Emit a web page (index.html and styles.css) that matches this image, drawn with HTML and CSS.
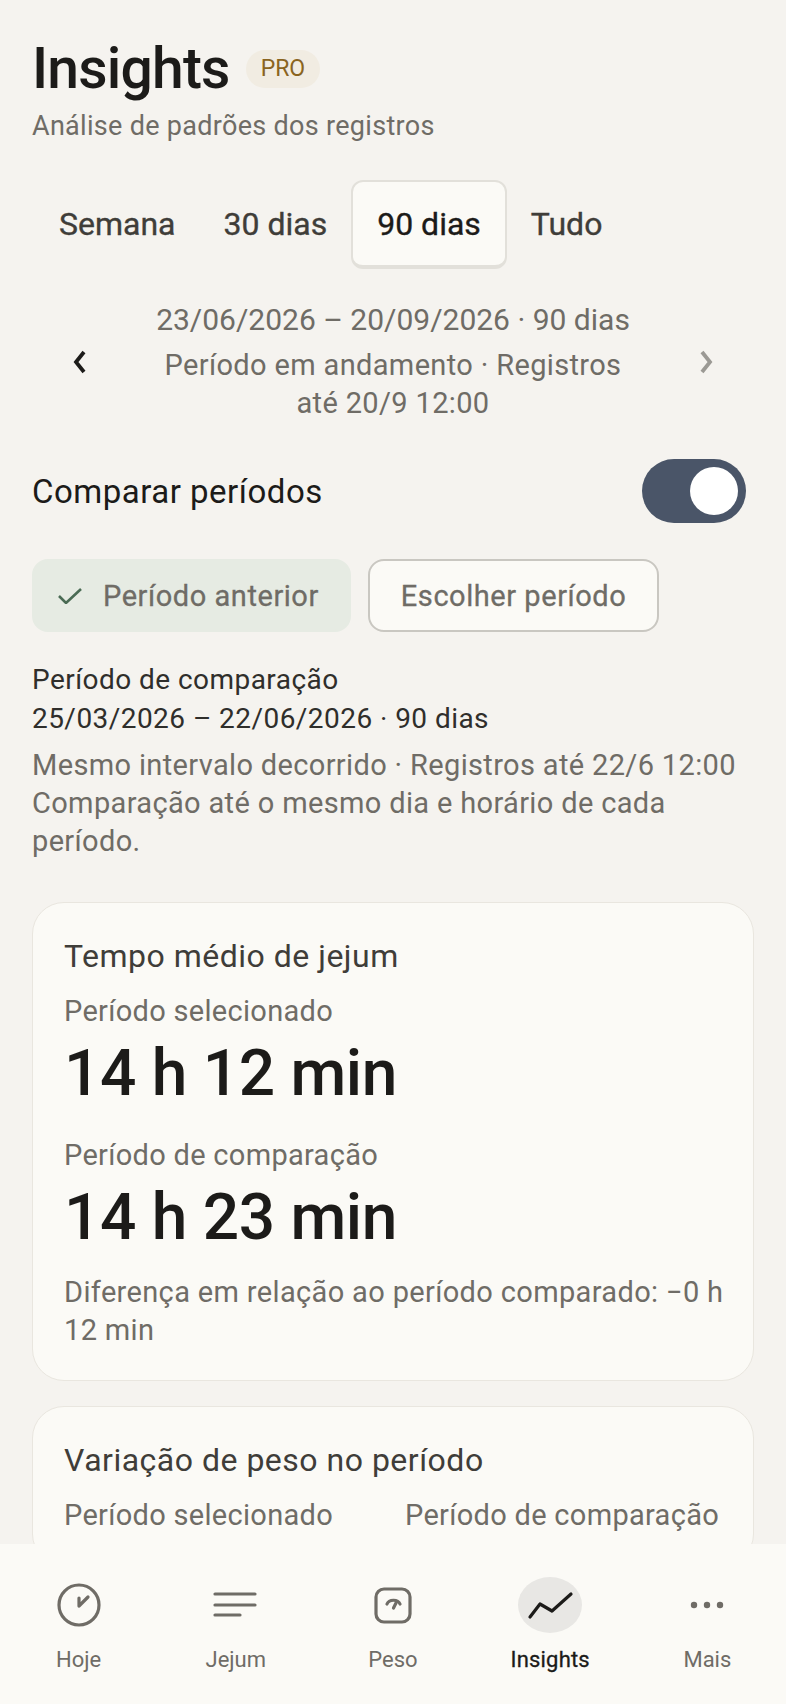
FILE: index.html
```html
<!DOCTYPE html>
<html lang="pt-BR">
<head>
  <meta charset="UTF-8" />
  <meta name="viewport" content="width=device-width, initial-scale=1.0" />
  <title>Insights</title>
  <link rel="stylesheet" href="styles.css">
</head>
<body>
  <div class="app">
    <main class="content">
      <div class="title-row">
        <h1>Insights</h1>
        <span class="pro-badge">PRO</span>
      </div>
      <p class="subtitle">Análise de padrões dos registros</p>

      <div class="tabs">
        <button class="tab">Semana</button>
        <button class="tab">30 dias</button>
        <button class="tab active">90 dias</button>
        <button class="tab">Tudo</button>
      </div>

      <div class="range-nav">
        <svg class="chevron" viewBox="0 0 16 24"><path d="M12 2 4 12l8 10"/></svg>
        <div class="range-text">
          <div class="range-dates">23/06/2026 – 20/09/2026 · 90 dias</div>
          <div class="range-note">Período em andamento · Registros até 20/9 12:00</div>
        </div>
        <svg class="chevron off" viewBox="0 0 16 24"><path d="M4 2l8 10-8 10"/></svg>
      </div>

      <div class="compare-row">
        <span class="compare-label">Comparar períodos</span>
        <span class="toggle"><span class="thumb"></span></span>
      </div>

      <div class="chips">
        <button class="chip selected">
          <svg class="check" viewBox="0 0 24 16"><path d="M1 8l7 7L23 1"/></svg>
          Período anterior
        </button>
        <button class="chip">Escolher período</button>
      </div>

      <div class="compare-info">
        <div class="info-strong">Período de comparação</div>
        <div class="info-strong">25/03/2026 – 22/06/2026 · 90 dias</div>
        <p class="info-note">Mesmo intervalo decorrido · Registros até 22/6 12:00 Comparação até o mesmo dia e horário de cada período.</p>
      </div>

      <section class="card">
        <h2>Tempo médio de jejum</h2>
        <div class="label">Período selecionado</div>
        <div class="value">14 h 12 min</div>
        <div class="label second">Período de comparação</div>
        <div class="value">14 h 23 min</div>
        <p class="diff">Diferença em relação ao período comparado: −0 h 12 min</p>
      </section>

      <section class="card">
        <h2>Variação de peso no período</h2>
        <div class="two-col">
          <div class="label">Período selecionado</div>
          <div class="label">Período de comparação</div>
        </div>
      </section>
    </main>

    <nav class="bottom-nav">
      <a class="nav-item">
        <span class="nav-icon">
          <svg viewBox="0 0 64 56"><circle cx="32" cy="28" r="20"/><path d="M32 29v-8M32 29l9-9"/></svg>
        </span>
        Hoje
      </a>
      <a class="nav-item">
        <span class="nav-icon">
          <svg viewBox="0 0 64 56"><path d="M11 17h40M11 28h40M11 38h25"/></svg>
        </span>
        Jejum
      </a>
      <a class="nav-item">
        <span class="nav-icon">
          <svg viewBox="0 0 64 56"><rect x="15" y="12" width="34" height="33" rx="8"/><path d="M26 27c2-5 11-5 13 0M35 26l-2.500 5"/></svg>
        </span>
        Peso
      </a>
      <a class="nav-item active">
        <span class="nav-icon">
          <svg viewBox="0 0 64 56"><path d="M12 40l10-13 12 7 19-17"/></svg>
        </span>
        Insights
      </a>
      <a class="nav-item">
        <span class="nav-icon">
          <svg viewBox="0 0 64 56"><circle class="dot" cx="19" cy="28" r="3.2"/><circle class="dot" cx="32" cy="28" r="3.2"/><circle class="dot" cx="45" cy="28" r="3.2"/></svg>
        </span>
        Mais
      </a>
    </nav>
  </div>
</body>
</html>
```

FILE: styles.css
```css
:root {
  --bg: #f5f3ef;
  --surface: #fbfaf6;
  --ink: #1c1b19;
  --ink-soft: #3f3d39;
  --muted: #6f6c66;
  --line: #e9e6df;
}
* {
  box-sizing: border-box;
  margin: 0;
  padding: 0;
}
html, body {
  height: 100%;
}
body {
  font-family: Roboto, "Liberation Sans", sans-serif;
  background-color: var(--bg);
  color: var(--ink);
}
button {
  font-family: inherit;
  border: none;
  background: none;
}
.app {
  height: 1704px;
  display: flex;
  flex-direction: column;
  overflow: hidden;
}
.content {
  flex: 1;
  min-height: 0;
  overflow: hidden;
  padding: 34px 32px 0;
}
.title-row {
  display: flex;
  align-items: center;
  gap: 16px;
  height: 70px;
}
h1 {
  font-size: 57px;
  font-weight: 500;
  line-height: 70px;
  letter-spacing: -0.8px;
}
.pro-badge {
  font-size: 23px;
  color: #8a6420;
  background-color: #f1ece2;
  border-radius: 19px;
  padding: 0 15px;
  height: 38px;
  line-height: 38px;
}
.subtitle {
  font-size: 27px;
  line-height: 36px;
  letter-spacing: 0.3px;
  color: var(--muted);
  margin-top: 4px;
}
.tabs {
  display: flex;
  padding: 0 3px;
  margin-top: 36px;
}
.tab {
  font-size: 32px;
  -webkit-text-stroke: 0.35px currentColor;
  color: var(--ink-soft);
  padding: 0 24px;
  height: 89px;
  line-height: 85px;
}
.tab.active {
  color: var(--ink);
  background-color: var(--surface);
  border: 2px solid #e2e0da;
  border-bottom-width: 4px;
  border-radius: 12px;
  padding: 0 24px;
  line-height: 82px;
}
.range-nav {
  display: flex;
  align-items: center;
  justify-content: space-between;
  padding: 0 40px;
  margin-top: 29px;
}
.chevron {
  width: 16px;
  height: 24px;
  margin-top: 4px;
  flex: none;
  fill: none;
  stroke: var(--ink);
  stroke-width: 3.8;
}
.chevron.off {
  stroke: #9b9994;
}
.range-text {
  width: 490px;
  text-align: center;
  color: var(--muted);
}
.range-dates {
  font-size: 30px;
  line-height: 44px;
}
.range-note {
  font-size: 29px;
  line-height: 38px;
  letter-spacing: 0.35px;
  margin-top: 4px;
}
.compare-row {
  display: flex;
  align-items: center;
  justify-content: space-between;
  padding-right: 8px;
  margin-top: 37px;
}
.compare-label {
  font-size: 33px;
  letter-spacing: 0.5px;
}
.toggle {
  display: flex;
  justify-content: flex-end;
  width: 104px;
  height: 64px;
  padding: 8px;
  background-color: #4a5568;
  border-radius: 32px;
}
.thumb {
  width: 48px;
  height: 48px;
  background-color: #fff;
  border-radius: 50%;
}
.chips {
  display: flex;
  gap: 17px;
  margin-top: 36px;
}
.chip {
  display: flex;
  align-items: center;
  height: 73px;
  padding: 0 31px;
  font-size: 29px;
  -webkit-text-stroke: 0.3px currentColor;
  letter-spacing: 0.55px;
  color: var(--muted);
  background-color: var(--surface);
  border: 2px solid #c9c7c1;
  border-radius: 16px;
}
.chip.selected {
  background-color: #e6ebe3;
  border-color: #e6ebe3;
  padding: 0 30px 0 24px;
}
.check {
  width: 24px;
  height: 16px;
  margin-right: 21px;
  fill: none;
  stroke: #4a6b54;
  stroke-width: 2.6;
}
.compare-info {
  margin-top: 28px;
}
.info-strong {
  font-size: 28px;
  line-height: 39px;
  letter-spacing: 0.45px;
  color: #2f2e2b;
}
.info-note {
  font-size: 29px;
  line-height: 38px;
  letter-spacing: 0.35px;
  color: var(--muted);
  margin-top: 8px;
}
.card {
  background-color: var(--surface);
  border: 1px solid var(--line);
  border-radius: 32px;
  padding: 31px 28px 31px 31px;
  margin-top: 25px;
}
.card:first-of-type {
  margin-top: 42px;
}
h2 {
  font-size: 32px;
  font-weight: 400;
  line-height: 44px;
  letter-spacing: 0.5px;
  color: var(--ink-soft);
}
.label {
  font-size: 29px;
  line-height: 38px;
  letter-spacing: 0.3px;
  color: var(--muted);
  margin-top: 14px;
}
.label.second {
  margin-top: 23px;
}
.value {
  font-size: 64px;
  font-weight: 500;
  line-height: 78px;
  letter-spacing: -0.3px;
  margin-top: 5px;
}
.diff {
  font-size: 29px;
  line-height: 38px;
  letter-spacing: 0.35px;
  color: var(--muted);
  margin-top: 16px;
}
.two-col {
  display: grid;
  grid-template-columns: 341px 1fr;
}
.bottom-nav {
  flex: none;
  display: grid;
  grid-template-columns: repeat(5, 1fr);
  height: 160px;
  background-color: var(--surface);
  padding-top: 33px;
}
.nav-item {
  display: flex;
  flex-direction: column;
  align-items: center;
  font-size: 22px;
  line-height: 30px;
  color: var(--muted);
}
.nav-icon {
  display: block;
  width: 64px;
  height: 56px;
  border-radius: 50%;
  margin-bottom: 12px;
}
.nav-icon svg {
  display: block;
  width: 64px;
  height: 56px;
  fill: none;
  stroke: var(--muted);
  stroke-width: 3.2;
  stroke-linecap: round;
  stroke-linejoin: round;
}
.nav-icon .dot {
  fill: var(--muted);
  stroke: none;
}
.nav-item.active {
  color: var(--ink);
  -webkit-text-stroke: 0.3px currentColor;
  letter-spacing: 0.2px;
}
.nav-item.active .nav-icon {
  background-color: #e8e7e4;
}
.nav-item.active svg {
  stroke: var(--ink);
}
```
